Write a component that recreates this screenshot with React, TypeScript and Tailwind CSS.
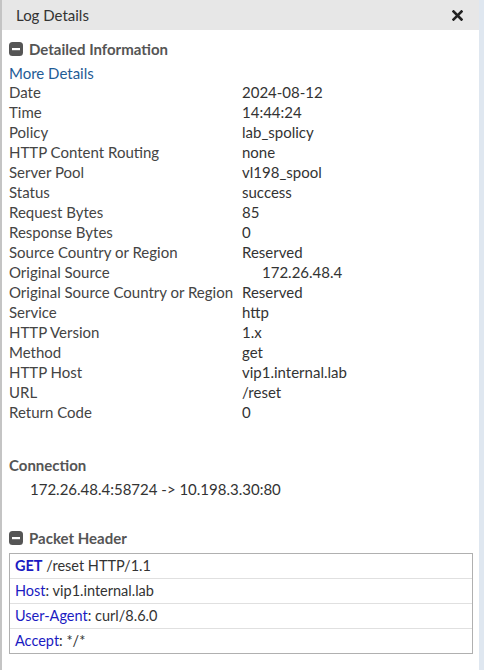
import React from "react";

const rows: [string, string, boolean?][] = [
  ["Date", "2024-08-12"],
  ["Time", "14:44:24"],
  ["Policy", "lab_spolicy"],
  ["HTTP Content Routing", "none"],
  ["Server Pool", "vl198_spool"],
  ["Status", "success"],
  ["Request Bytes", "85"],
  ["Response Bytes", "0"],
  ["Source Country or Region", "Reserved"],
  ["Original Source", "172.26.48.4", true],
  ["Original Source Country or Region", "Reserved"],
  ["Service", "http"],
  ["HTTP Version", "1.x"],
  ["Method", "get"],
  ["HTTP Host", "vip1.internal.lab"],
  ["URL", "/reset"],
  ["Return Code", "0"],
];

function MinusSquare() {
  return (
    <svg width="14" height="14" viewBox="0 0 14 14" className="shrink-0">
      <rect x="0" y="0" width="14" height="14" rx="3.5" fill="#555" />
      <rect x="3" y="6" width="8" height="2.2" fill="#fff" />
    </svg>
  );
}

export default function App() {
  return (
    <div
      className="flex w-[484px] h-[670px] bg-white text-[#333]"
      style={{ fontFamily: "Lato, 'Open Sans', sans-serif" }}
    >
      <div className="flex flex-col w-[479px] h-full border-l-2 border-[#c4c4c4]">
        <div className="flex items-center justify-between h-[30px] bg-[#e7e7e7] pl-[14px] pr-[16px]">
          <span className="text-[15px] text-[#333]">Log Details</span>
          <svg width="11" height="11" viewBox="0 0 11 11">
            <path d="M1.5 1.5 L9.5 9.5 M9.5 1.5 L1.5 9.5" stroke="#222" strokeWidth="2.6" strokeLinecap="square" />
          </svg>
        </div>
        <div className="flex flex-col pl-[7px] pr-[6px] pt-[10px]">
          <div className="flex items-center gap-[6px] h-[18px]">
            <MinusSquare />
            <span className="text-[15px] font-bold text-[#555]">Detailed Information</span>
          </div>
          <div className="h-[18px] leading-[18px] mt-[6px] text-[15px] text-[#1f5c96]">More Details</div>
          <div className="flex flex-col">
            {rows.map(([k, v, indent]) => (
              <div key={k} className="flex h-[20px] leading-[20px] text-[15px]">
                <span className="w-[233px] shrink-0 text-[#444]">{k}</span>
                <span className={indent ? "pl-[20px] text-[#333]" : "text-[#333]"}>{v}</span>
              </div>
            ))}
          </div>
          <div className="mt-[33px] h-[20px] leading-[20px] text-[15px] font-bold text-[#555]">Connection</div>
          <div className="mt-[4px] h-[20px] leading-[20px] text-[15px] pl-[21px]">172.26.48.4:58724 -&gt; 10.198.3.30:80</div>
          <div className="flex items-center gap-[6px] h-[18px] mt-[30px]">
            <MinusSquare />
            <span className="text-[15px] font-bold text-[#555]">Packet Header</span>
          </div>
          <div className="mt-[6px] w-[464px] border border-[#b0b0b0] text-[14.5px]">
            <div className="h-[25px] leading-[24px] px-[5px] border-b border-[#e0e0e0]">
              <span className="font-bold text-[#1b1bc2]">GET</span> /reset HTTP/1.1
            </div>
            <div className="h-[25px] leading-[24px] px-[5px] border-b border-[#e0e0e0]">
              <span className="text-[#1b1bc2]">Host</span>: vip1.internal.lab
            </div>
            <div className="h-[25px] leading-[24px] px-[5px] border-b border-[#e0e0e0]">
              <span className="text-[#1b1bc2]">User-Agent</span>: curl/8.6.0
            </div>
            <div className="h-[24px] leading-[24px] px-[5px]">
              <span className="text-[#1b1bc2]">Accept</span>: */*
            </div>
          </div>
        </div>
      </div>
      <div className="w-[5px] h-full bg-[#dfe7f0]" />
    </div>
  );
}
